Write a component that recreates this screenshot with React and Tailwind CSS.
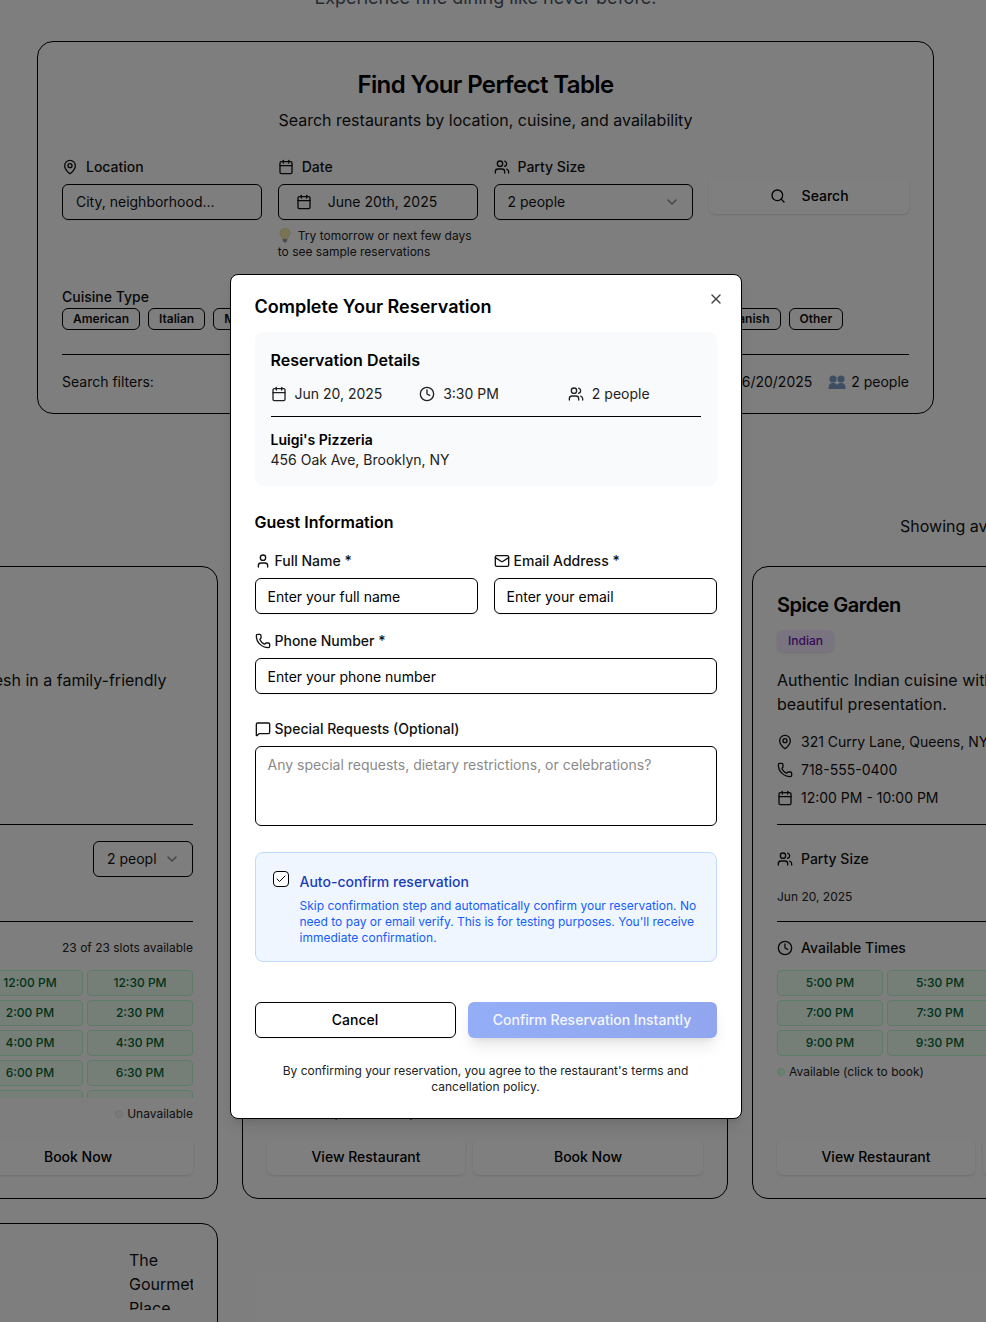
import React from "react";
import { MapPin, Calendar, Users, Search, ChevronDown, X, Clock, User, Mail, Phone, MessageSquare, Check } from "lucide-react";

const font = { fontFamily: "Inter, 'Liberation Sans', sans-serif" };

function Bulb() {
  return (
    <svg width="12" height="15" viewBox="0 0 12 15" className="inline-block align-[-3px] mr-[7px] ml-[1px]">
      <path d="M6 .5C3 .5 1 2.6 1 5.2c0 2.2 1.7 3.4 2.4 5.6h5.2C9.300 8.600 11 7.400 11 5.200 11 2.600 9 .5 6 .5Z" fill="#f5e7a8" stroke="#d9c97a" strokeWidth=".6" />
      <path d="M3.800 11h4.400v2l-1.200 1.500H5L3.800 13Z" fill="#8f95a3" />
    </svg>
  );
}

function Busts() {
  return (
    <svg width="18" height="16" viewBox="0 0 18 16">
      <g fill="#7a9cc6">
        <circle cx="5" cy="5" r="3.600" />
        <path d="M.5 15c0-4 .9-6 4.500-6s4.500 2 4.500 6Z" />
        <circle cx="13" cy="5" r="3.600" />
        <path d="M8.500 15c0-4 .9-6 4.500-6s4.500 2 4.500 6Z" />
      </g>
    </svg>
  );
}

function Slots({ times, clip }) {
  return (
    <div className={`mt-3 grid grid-cols-4 gap-1 overflow-hidden ${clip ? "h-[128px]" : ""}`}>
      {times.map((t) => (
        <div key={t} className="h-[26px] flex items-center justify-center rounded-[4px] border border-green-200 bg-[#ecfdf1] text-xs font-medium text-green-800">
          {t}
        </div>
      ))}
    </div>
  );
}

function RestaurantCard({ name, cuisine, badge, desc, address, phone, hours, times, clip, widths }) {
  return (
    <div className="h-[633px] rounded-2xl border border-black flex flex-col px-6 pt-6 pb-[23px]">
      <h3 className="text-xl leading-7 font-semibold tracking-tight text-black">{name}</h3>
      <span className={`mt-[11px] self-start h-[22px] px-[11px] flex items-center rounded-md text-xs font-medium shadow-sm ${badge}`}>{cuisine}</span>
      <p className="mt-4 h-12 text-base leading-6 text-[#111]">{desc}</p>
      <div className="mt-4 flex flex-col gap-2 text-sm leading-5 text-[#111]">
        <div className="flex items-center gap-2"><MapPin size={16} />{address}</div>
        <div className="flex items-center gap-2"><Phone size={16} />{phone}</div>
        <div className="flex items-center gap-2"><Calendar size={16} />{hours}</div>
      </div>
      <div className="mt-4 border-t border-black" />
      <div className="mt-4 h-9 flex items-center justify-between">
        <div className="flex items-center gap-2 text-sm font-medium text-[#111]"><Users size={16} />Party Size</div>
        <div className="w-[100px] h-9 rounded-md border border-black pl-[13px] pr-3 flex items-center justify-between text-sm text-[#111]">
          <span className="w-[50px] overflow-hidden whitespace-nowrap">2 people</span>
          <ChevronDown size={16} className="opacity-50" />
        </div>
      </div>
      <div className="mt-3 text-xs leading-4 text-[#222]">Jun 20, 2025</div>
      <div className="mt-4 border-t border-black" />
      <div className="mt-4 h-5 flex items-center justify-between">
        <div className="flex items-center gap-2 text-sm font-medium text-[#111]"><Clock size={16} />Available Times</div>
        <div className="text-xs text-[#222]">{times.length} of {times.length} slots available</div>
      </div>
      <Slots times={times} clip={clip} />
      <div className="mt-2 h-4 flex items-center justify-between text-xs text-[#222]">
        <div className="flex items-center gap-1"><span className="w-2 h-2 rounded-full bg-green-100 border border-green-200" />Available (click to book)</div>
        <div className="flex items-center gap-1"><span className="w-2 h-2 rounded-full bg-gray-100 border border-gray-200" />Unavailable</div>
      </div>
      <div className="mt-auto flex gap-2" style={{}}>
        <button className={`h-9 ${widths[0]} rounded-md bg-white text-sm font-medium text-black shadow-sm`}>View Restaurant</button>
        <button className={`h-9 ${widths[1]} rounded-md bg-white text-sm font-medium text-black shadow-sm`}>Book Now</button>
      </div>
    </div>
  );
}

const daySlots = [
  "11:00 AM","11:30 AM","12:00 PM","12:30 PM","1:00 PM","1:30 PM","2:00 PM","2:30 PM","3:00 PM","3:30 PM","4:00 PM","4:30 PM",
  "5:00 PM","5:30 PM","6:00 PM","6:30 PM","7:00 PM","7:30 PM","8:00 PM","8:30 PM","9:00 PM","9:30 PM","10:00 PM",
];
const eveSlots = ["5:00 PM","5:30 PM","6:00 PM","6:30 PM","7:00 PM","7:30 PM","8:00 PM","8:30 PM","9:00 PM","9:30 PM"];

const chips = ["American","Italian","Mexican","Chinese","Japanese","Indian","French","Thai","Greek","Spanish","Other"];

function Field({ icon, label, children }) {
  return (
    <div>
      <div className="h-5 flex items-center gap-2 text-sm font-medium text-[#111]">{icon}{label}</div>
      {children}
    </div>
  );
}

const fieldBox = "mt-[7px] h-9 rounded-md border border-black flex items-center text-sm text-[#111] shadow-xs";

function SearchCard() {
  return (
    <section className="mx-[37px] h-[373px] rounded-2xl border border-black px-6 pt-[27px]">
      <h2 className="text-center text-2xl leading-8 font-semibold tracking-tight text-black">Find Your Perfect Table</h2>
      <p className="mt-[7px] text-center text-base leading-6 text-[#111]">Search restaurants by location, cuisine, and availability</p>
      <div className="mt-[25px] grid grid-cols-4 gap-4 items-start">
        <Field icon={<MapPin size={16} />} label="Location">
          <div className={`${fieldBox} px-[13px]`}>City, neighborhood...</div>
        </Field>
        <div>
          <Field icon={<Calendar size={16} />} label="Date">
            <div className={`${fieldBox} pl-[17px] gap-4`}><Calendar size={16} />June 20th, 2025</div>
          </Field>
          <p className="mt-2 text-xs leading-4 text-[#222]"><Bulb />Try tomorrow or next few days to see sample reservations</p>
        </div>
        <Field icon={<Users size={16} />} label="Party Size">
          <div className={`${fieldBox} pl-[13px] pr-3 justify-between`}>2 people<ChevronDown size={16} className="opacity-50" /></div>
        </Field>
        <button className="mt-6 h-9 -translate-y-[3px] rounded-md bg-white shadow-sm flex items-center justify-center gap-4 text-sm font-medium text-black"><Search size={16} />Search</button>
      </div>
      <div className="mt-[27px] text-sm leading-5 font-medium text-[#111]">Cuisine Type</div>
      <div className="mt-[1px] flex gap-2">
        {chips.map((c) => (
          <span key={c} className="h-[22px] px-[10px] flex items-center rounded-md border border-black text-xs font-semibold text-[#111]">{c}</span>
        ))}
      </div>
      <div className="mt-6 border-t border-black" />
      <div className="mt-[17px] flex items-center justify-between text-sm leading-5 text-[#111]">
        <span>Search filters:</span>
        <span className="flex items-center gap-4">
          <span>6/20/2025</span>
          <span className="flex items-center gap-[5px]"><Busts />2 people</span>
        </span>
      </div>
    </section>
  );
}

function Results() {
  return (
    <div className="w-[1506px] -ml-[268px]">
      <div className="mt-[100px] h-6 flex justify-end text-base leading-6 text-[#111]">
        <span className="w-[338px] whitespace-nowrap overflow-hidden">Showing available tables for June 20, 2025</span>
      </div>
      <div className="mt-7 grid grid-cols-3 gap-6">
        <RestaurantCard
          name="Bella Vista"
          cuisine="Italian"
          badge="bg-green-100 text-green-800"
          desc="Classic Italian recipes served fresh in a family-friendly atmosphere."
          address="123 Main St, Manhattan, NY"
          phone="212-555-0100"
          hours="11:00 AM - 10:00 PM"
          times={daySlots}
          clip
          widths={["w-[198px]", "flex-1"]}
        />
        <RestaurantCard
          name="Luigi's Pizzeria"
          cuisine="Italian"
          badge="bg-green-100 text-green-800"
          desc="Authentic wood-fired pizza and homemade pasta."
          address="456 Oak Ave, Brooklyn, NY"
          phone="718-555-0200"
          hours="11:00 AM - 10:00 PM"
          times={daySlots}
          clip
          widths={["w-[198px]", "flex-1"]}
        />
        <RestaurantCard
          name="Spice Garden"
          cuisine="Indian"
          badge="bg-purple-100 text-purple-800"
          desc="Authentic Indian cuisine with aromatic spices and beautiful presentation."
          address="321 Curry Lane, Queens, NY"
          phone="718-555-0400"
          hours="12:00 PM - 10:00 PM"
          times={eveSlots}
          widths={["w-[198px]", "flex-1"]}
        />
      </div>
      <div className="mt-6 grid grid-cols-3 gap-6">
        <div className="h-[200px] rounded-t-2xl border border-black px-6 pt-6 flex justify-end">
          <h3 className="w-[64px] h-[62px] overflow-hidden text-base leading-6 text-[#111]">The Gourmet Place</h3>
        </div>
      </div>
    </div>
  );
}

function Label({ icon, children, className = "" }) {
  return <div className={`h-5 flex items-center gap-1 text-sm font-medium text-[#111] ${className}`}>{icon}{children}</div>;
}

const inputCls = "mt-[7px] w-full h-9 rounded-md border border-black bg-white px-3 text-sm text-black placeholder:text-black outline-none shadow-xs";

function Modal() {
  return (
    <div className="absolute inset-0 bg-black/50 pt-[274px] pr-[15px] flex justify-center items-start">
      <div className="relative w-[512px] rounded-lg border border-black bg-white px-6 pt-6 pb-[23px] shadow-lg">
        <button className="absolute right-[17px] top-[16px] text-[#444]"><X size={16} /></button>
        <h2 className="text-lg leading-[18px] font-semibold text-black mt-[-1px]">Complete Your Reservation</h2>
        <div className="mt-[16px] rounded-lg bg-[#f9fafb] p-4">
          <h3 className="text-base leading-6 font-semibold text-black">Reservation Details</h3>
          <div className="mt-3 grid grid-cols-3 gap-4 text-sm leading-5 text-[#222]">
            <div className="flex items-center gap-2"><Calendar size={16} />Jun 20, 2025</div>
            <div className="flex items-center gap-2"><Clock size={16} />3:30 PM</div>
            <div className="flex items-center gap-2"><Users size={16} />2 people</div>
          </div>
          <div className="mt-3 border-t border-black" />
          <div className="mt-[13px] text-sm leading-5 font-semibold text-black">Luigi's Pizzeria</div>
          <div className="text-sm leading-5 text-[#222]">456 Oak Ave, Brooklyn, NY</div>
        </div>
        <h3 className="mt-6 text-base leading-6 font-semibold text-black">Guest Information</h3>
        <div className="mt-[17px] grid grid-cols-2 gap-4">
          <div>
            <Label icon={<User size={16} />}>Full Name *</Label>
            <input className={inputCls} placeholder="Enter your full name" />
          </div>
          <div>
            <Label icon={<Mail size={16} />}>Email Address *</Label>
            <input className={inputCls} placeholder="Enter your email" />
          </div>
        </div>
        <Label icon={<Phone size={16} />} className="mt-[17px]">Phone Number *</Label>
        <input className={inputCls} placeholder="Enter your phone number" />
        <Label icon={<MessageSquare size={16} />} className="mt-[25px]">Special Requests (Optional)</Label>
        <textarea className="mt-[7px] block w-full h-20 resize-none rounded-md border border-black bg-white px-3 py-2 text-sm leading-5 text-black placeholder:text-[#8a8a8a] outline-none" placeholder="Any special requests, dietary restrictions, or celebrations?" />
        <div className="mt-[26px] h-[110px] rounded-lg border border-blue-200 bg-blue-50 p-4 flex gap-3">
          <span className="mt-[2px] ml-[1px] w-4 h-4 shrink-0 rounded-[4px] border border-black bg-white flex items-center justify-center"><Check size={12} strokeWidth={2} /></span>
          <div className="-ml-[1px]">
            <div className="mt-[3px] text-sm leading-5 font-medium text-blue-800">Auto-confirm reservation</div>
            <p className="mt-[6px] text-xs leading-4 text-blue-600">Skip confirmation step and automatically confirm your reservation. No need to pay or email verify. This is for testing purposes. You'll receive immediate confirmation.</p>
          </div>
        </div>
        <div className="mt-10 flex gap-3">
          <button className="h-9 w-[201px] rounded-md border border-black bg-white text-sm font-medium text-black shadow-xs">Cancel</button>
          <button disabled className="h-9 flex-1 rounded-md bg-gradient-to-r from-[#93aef7] to-[#91a6ee] text-sm font-medium text-white/90 shadow-lg">Confirm Reservation Instantly</button>
        </div>
        <p className="mt-[25px] text-center text-xs leading-4 text-[#222]">By confirming your reservation, you agree to the restaurant's terms and cancellation policy.</p>
      </div>
    </div>
  );
}

export default function App() {
  return (
    <div className="relative w-[986px] h-[1322px] overflow-hidden bg-[#fdfdfd]" style={font}>
      <div className="w-[971px]">
        <p className="-mt-[16px] h-7 text-center text-lg leading-7 text-gray-600 mb-[29px]">Experience fine dining like never before.</p>
        <SearchCard />
        <Results />
      </div>
      <Modal />
    </div>
  );
}
